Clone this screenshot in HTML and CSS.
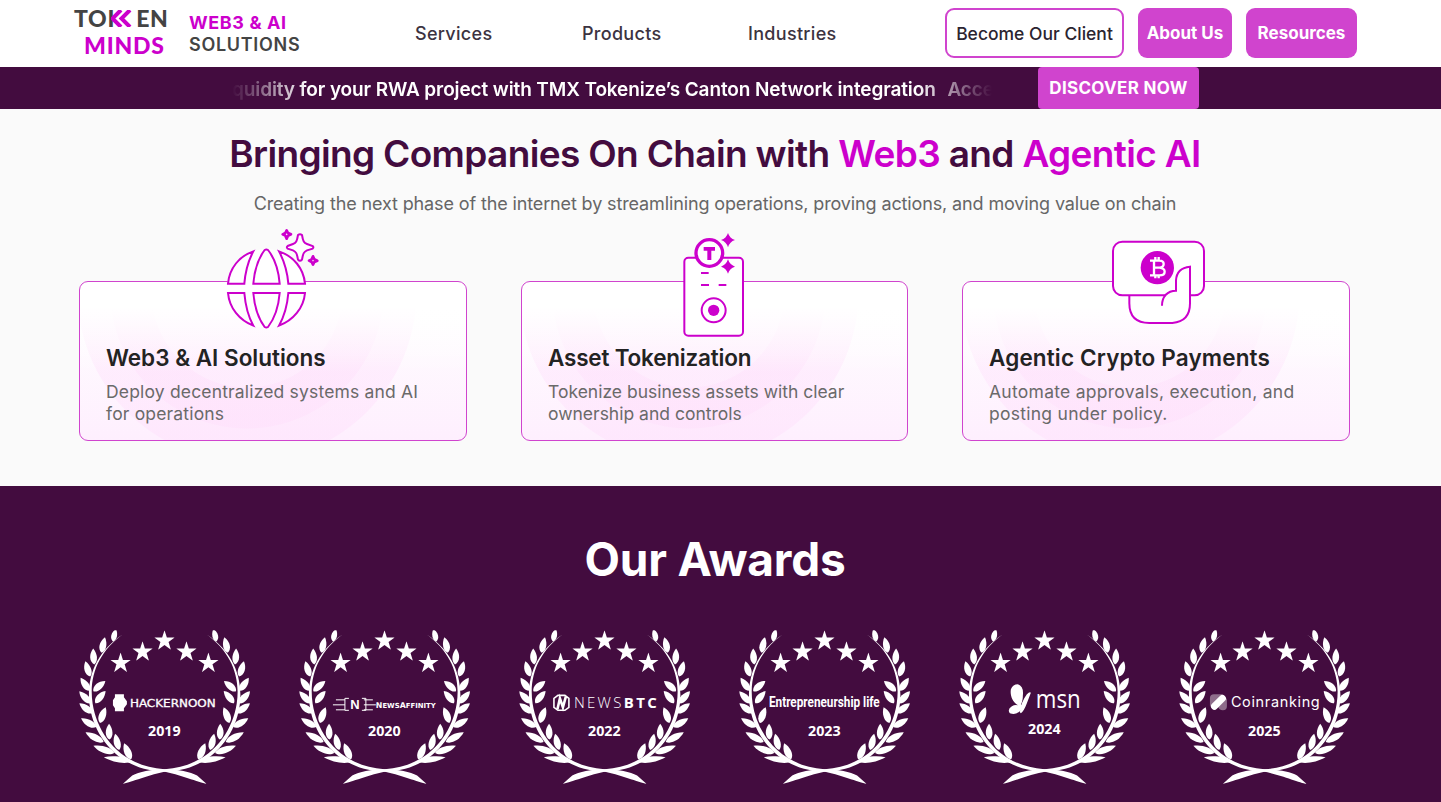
FILE: index.html
```
<!DOCTYPE html>
<html lang="en">
<head>
    <meta charset="UTF-8">
    <meta name="viewport" content="width=device-width, initial-scale=1.0">
    <title>TokenMinds</title>
    <link rel="stylesheet" href="styles.css">
</head>
<body>

    <!-- shared shapes for the award badges -->
    <svg class="defs" width="0" height="0" aria-hidden="true">
        <symbol id="star" viewBox="0 0 60 58">
            <path d="M30 0L37 22H60L42 35L49 58L30 44L11 58L18 35L0 22H23Z"/>
        </symbol>
        <path id="leaf" d="M0 0C-15 -9 -14 -32 0 -48C12 -32 13 -9 0 0Z"/>
        <g id="branch">
            <path d="M158 57C88 108 55 180 68 265C82 355 150 453 284 462C325 463 362 469 382 481L410 506C390 503 325 476 280 469C145 465 68 360 58 262C50 178 84 106 158 57Z"/>
            <use href="#leaf" transform="translate(129 78) rotate(14) scale(.85 .8)"/>
            <use href="#leaf" transform="translate(95 112) rotate(12)"/>
            <use href="#leaf" transform="translate(73 147) rotate(-4)"/>
            <use href="#leaf" transform="translate(61 183) rotate(-18)"/>
            <use href="#leaf" transform="translate(60 226) rotate(-36)"/>
            <use href="#leaf" transform="translate(63 264) rotate(-44) scale(1 1.05)"/>
            <use href="#leaf" transform="translate(69 293) rotate(-54) scale(1 1.05)"/>
            <use href="#leaf" transform="translate(79 335) rotate(-60) scale(1 1.1)"/>
            <use href="#leaf" transform="translate(101 380) rotate(-62) scale(1 1.28)"/>
            <use href="#leaf" transform="translate(133 413) rotate(-71) scale(1 1.38)"/>
            <use href="#leaf" transform="translate(187 438) rotate(-82) scale(.85 1.8)"/>
            <use href="#leaf" transform="translate(70 228) rotate(49)"/>
            <use href="#leaf" transform="translate(76 264) rotate(40)"/>
            <use href="#leaf" transform="translate(90 323) rotate(20) scale(1.05)"/>
            <use href="#leaf" transform="translate(119 373) rotate(-2)"/>
            <use href="#leaf" transform="translate(148 404) rotate(-14) scale(1 1.05)"/>
            <use href="#leaf" transform="translate(184 432) rotate(-24) scale(1.05 1.1)"/>
        </g>
        <symbol id="wreath" viewBox="27 44 514 465">
            <use href="#branch"/>
            <use href="#branch" transform="translate(569 0) scale(-1 1)"/>
            <use href="#star" x="121" y="111" width="62" height="59"/>
            <use href="#star" x="187" y="77" width="62" height="59"/>
            <use href="#star" x="253" y="44" width="62" height="59"/>
            <use href="#star" x="319" y="77" width="62" height="59"/>
            <use href="#star" x="385" y="111" width="62" height="59"/>
        </symbol>
    </svg>

    <header class="header">
        <a class="logo" href="#">
            <span class="logo-name">
                <span class="logo-token">TOI<svg width="21" height="17" viewBox="0 0 21 17"><path d="M10 0L1.5 8.5L10 17M19 0L10.5 8.5L19 17" fill="none" stroke="#c0c" stroke-width="4"/></svg>EN</span>
                <span class="logo-minds">MINDS</span>
            </span>
            <span class="logo-tag"><b>WEB3 &amp; AI</b><br>SOLUTIONS</span>
        </a>
        <nav class="nav">
            <a href="#">Services</a>
            <a href="#">Products</a>
            <a href="#">Industries</a>
        </nav>
        <div class="header-buttons">
            <a class="btn btn-outline" href="#">Become Our Client</a>
            <a class="btn btn-about" href="#">About Us</a>
            <a class="btn btn-resources" href="#">Resources</a>
        </div>
    </header>

    <div class="ticker">
        <div class="ticker-text"><p>quidity for your RWA project with TMX Tokenize’s Canton Network integration <span>Acce</span></p></div>
        <a class="ticker-button" href="#">DISCOVER NOW</a>
    </div>

    <section class="hero">
        <h1>Bringing Companies On Chain with <em>Web3</em> and <em>Agentic AI</em></h1>
        <p class="subtitle">Creating the next phase of the internet by streamlining operations, proving actions, and moving value on chain</p>

        <div class="cards">
            <article class="card">
                <svg class="card-icon icon-globe" width="140" height="120" viewBox="0 0 420 360">
                    <circle cx="199" cy="205" r="118" fill="#fff"/>
                    <g fill="#fff" stroke="#c0c" stroke-width="6">
                        <path d="M84 191C88 145 118 108 160 94C145 122 136 155 133 191Z"/>
                        <path d="M160 191C163 153 175 115 194 90Q199 87 204 90C224 115 236 153 239 191Z"/>
                        <path d="M315 191C311 145 280 108 237 94C252 122 262 155 265 191Z"/>
                        <path d="M84 219C88 264 118 301 160 317C145 290 136 255 133 219Z"/>
                        <path d="M160 219C163 257 175 295 194 321Q199 324 204 321C224 295 236 257 239 219Z"/>
                        <path d="M315 219C311 264 280 301 237 317C252 290 262 255 265 219Z"/>
                        <path d="M294 45Q300 40 306 45C309 64 312 69 321 72L338 78Q342 82 338 86L321 91C312 95 309 100 306 119Q300 126 294 119C291 100 288 95 279 91L263 86Q258 82 263 78L279 72C288 69 291 64 294 45Z"/>
                        <g stroke-linejoin="round" stroke-width="8">
                            <path d="M260 31L264 39L273 43L264 47L260 56L256 47L248 43L256 39Z"/>
                            <path d="M339 109L343 118L352 122L343 126L339 134L335 126L327 122L335 118Z"/>
                        </g>
                    </g>
                </svg>
                <h2>Web3 &amp; AI Solutions</h2>
                <p>Deploy decentralized systems and AI<br>for operations</p>
            </article>
            <article class="card card-asset">
                <svg class="card-icon icon-token" width="110" height="120" viewBox="0 0 330 360">
                    <rect x="73" y="98" width="176" height="234" rx="12" fill="#fff" stroke="#c0c" stroke-width="6"/>
                    <circle cx="148" cy="84" r="40" fill="#fff" stroke="#c0c" stroke-width="10"/>
                    <path d="M131 66H165V77H154V105H142V77H131Z" fill="#c0c"/>
                    <path d="M123 144H146M123 180H147M176 180H199" stroke="#c0c" stroke-width="6"/>
                    <circle cx="161" cy="256" r="36" fill="none" stroke="#c0c" stroke-width="6"/>
                    <circle cx="161" cy="256" r="17" fill="#c0c"/>
                    <path d="M204 24Q209 40 225 45Q209 50 204 67Q199 50 183 45Q199 40 204 24ZM204 103Q209 119 225 125Q209 130 204 146Q199 130 183 125Q199 119 204 103Z" fill="#c0c"/>
                </svg>
                <h2>Asset Tokenization</h2>
                <p>Tokenize business assets with clear<br>ownership and controls</p>
            </article>
            <article class="card card-payments">
                <svg class="card-icon icon-pay" width="130" height="110" viewBox="0 0 390 330">
                    <g fill="#fff" stroke="#c0c" stroke-width="6">
                        <path d="M103 208V235Q103 294 163 294H232Q285 290 285 235V208Z"/>
                        <rect x="54" y="50" width="273" height="161" rx="28"/>
                        <path d="M201 242C201 215 217 197 243 197V166Q245 129 285 125V214L279 230H205Z" stroke="none"/>
                        <path d="M201 242C201 215 217 197 243 197V166Q245 129 285 125V235" fill="none"/>
                    </g>
                    <circle cx="187" cy="128" r="50" fill="#c0c"/>
                    <path d="M165 107H193Q206 107 206 117Q206 126 194 128Q209 130 209 140Q209 151 193 151H165M177 107V151M177 128H194M181 96V107M191 96V107M181 151V160M191 151V160" fill="none" stroke="#fff" stroke-width="7"/>
                </svg>
                <h2>Agentic Crypto Payments</h2>
                <p>Automate approvals, execution, and<br>posting under policy.</p>
            </article>
        </div>
    </section>

    <section class="awards">
        <h2>Our Awards</h2>
        <div class="awards-list">
            <div class="award">
                <svg width="171" height="155" viewBox="9 14.67 171.33 155">
                    <use href="#wreath" x="9" y="14.67" width="171.33" height="155"/>
                    <path d="M45 79H54V82L57 86V89L54 93V96H45V93L43 90V85L45 82Z"/>
                    <text class="brand-hacker" x="60" y="91.5" textLength="86" lengthAdjust="spacingAndGlyphs">HACKERNOON</text>
                    <text class="year" x="94.5" y="121">2019</text>
                </svg>
            </div>
            <div class="award">
                <svg width="171" height="155" viewBox="9 14.67 171.33 155">
                    <use href="#wreath" x="9" y="14.67" width="171.33" height="155"/>
                    <path d="M46 84.5H55M43 89.5H55M46 94.5H55M59 83H55V95H59M72 83H76V95H72M74 84.5H83M74 89.5H86M74 94.5H83" fill="none" stroke="#fff" stroke-width="1"/>
                    <text class="brand-n" x="65" y="94">N</text>
                    <text class="brand-affinity" x="86" y="92.5" textLength="60" lengthAdjust="spacingAndGlyphs">N<tspan font-size="7">EWS</tspan>A<tspan font-size="7">FFINITY</tspan></text>
                    <text class="year" x="94.5" y="121">2020</text>
                </svg>
            </div>
            <div class="award">
                <svg width="171" height="155" viewBox="9 14.67 171.33 155">
                    <use href="#wreath" x="9" y="14.67" width="171.33" height="155"/>
                    <path d="M48 80H55L59 83V92L55 95H48L44 92V83Z" fill="none" stroke="#fff" stroke-width="1.6"/>
                    <path d="M47.5 94L50 83L53 92L56 81" fill="none" stroke="#fff" stroke-width="2.6"/>
                    <text class="brand-btc" x="64" y="92.5" textLength="83">NEWS<tspan font-weight="700">BTC</tspan></text>
                    <text class="year" x="94.5" y="121">2022</text>
                </svg>
            </div>
            <div class="award">
                <svg width="171" height="155" viewBox="9 14.67 171.33 155">
                    <use href="#wreath" x="9" y="14.67" width="171.33" height="155"/>
                    <text class="brand-life" x="39" y="91.5" textLength="111" lengthAdjust="spacingAndGlyphs">Entrepreneurship life</text>
                    <text class="year" x="94.5" y="121">2023</text>
                </svg>
            </div>
            <div class="award">
                <svg width="171" height="155" viewBox="9 14.67 171.33 155">
                    <use href="#wreath" x="9" y="14.67" width="171.33" height="155"/>
                    <path d="M68 90C62 86 60 79 61 74Q63 69 68 69Q74 71 73 80Q73 86 71 89Q74 91 71 95Q67 100 60 98Q57 94 62 91Q65 89 68 90Z"/>
                    <path d="M70 97Q71 87 77 79Q80 76 81 77.5L77 88Q74 96 71 98Z"/>
                    <text class="brand-msn" x="86" y="93" textLength="45" lengthAdjust="spacingAndGlyphs">msn</text>
                    <text class="year" x="94.5" y="119">2024</text>
                </svg>
            </div>
            <div class="award">
                <svg width="171" height="155" viewBox="9 14.67 171.33 155">
                    <use href="#wreath" x="9" y="14.67" width="171.33" height="155"/>
                    <path d="M44 79H53L40 91V83Q40 79 44 79ZM57 83V91Q57 95 53 95Q49 95 48 91Z" opacity=".4"/>
                    <path d="M44.5 91L52.5 83" stroke="#fff" stroke-width="7" stroke-linecap="round"/>
                    <text class="brand-coin" x="61" y="92" textLength="89">Coinranking</text>
                    <text class="year" x="94.5" y="121">2025</text>
                </svg>
            </div>
        </div>
    </section>

</body>
</html>
```
FILE: styles.css
```
* {
    box-sizing: border-box;
}

body {
    margin: 0;
    font-family: Inter, "Open Sans", sans-serif;
    background-color: #fafafa;
    color: #232323;
    overflow: hidden;
}

a {
    color: inherit;
    text-decoration: none;
}

h1, h2, p {
    margin: 0;
}

.defs {
    display: block;
}

.header {
    display: grid;
    grid-template-columns: 341px 530px auto;
    height: 67px;
    padding-left: 74px;
    background-color: #fff;
}

.logo {
    display: flex;
    font-family: Lato, sans-serif;
    color: #444;
}

.logo-name {
    display: flex;
    flex-direction: column;
    width: 115px;
    padding-top: 5px;
    font-size: 23px;
    font-weight: 900;
    line-height: 27px;
}

.logo-token {
    white-space: nowrap;
    line-height: 27px;
    letter-spacing: 0.7px;
}

.logo-token svg {
    margin-left: -4px;
    margin-right: 4px;
}

.logo-minds {
    padding-left: 10px;
    color: #c0c;
    letter-spacing: 0.8px;
}

.logo-tag {
    padding-top: 12px;
    font-family: Inter, sans-serif;
    font-size: 18px;
    font-weight: 600;
    line-height: 22px;
    letter-spacing: 0.7px;
}

.logo-tag b {
    font-weight: 700;
    color: #c0c;
    letter-spacing: 0.6px;
}

.nav {
    display: grid;
    grid-template-columns: 167px 166px auto;
    padding-top: 22px;
    font-size: 18px;
    font-weight: 500;
    line-height: 23px;
    letter-spacing: 0.3px;
    color: #3c3341;
}

.header-buttons {
    display: flex;
    gap: 14px;
    padding-top: 8px;
}

.btn {
    display: flex;
    align-items: center;
    justify-content: center;
    height: 50px;
    border-radius: 9px;
    background-color: #d044ce;
    color: #fff;
    font-size: 17px;
    font-weight: 700;
    white-space: nowrap;
}

.btn-outline {
    width: 179px;
    border: 2px solid #d044ce;
    background-color: #fff;
    color: #2b2430;
    font-size: 17.5px;
    font-weight: 500;
}

.btn-about {
    width: 94px;
}

.btn-resources {
    width: 111px;
}

.ticker {
    display: flex;
    height: 42px;
    padding-left: 232px;
    background-color: #430c3f;
    color: #fff;
}

.ticker-text {
    width: 760px;
    margin-right: 46px;
    -webkit-mask-image: linear-gradient(90deg, transparent, #000 76px, #000 684px, transparent);
    mask-image: linear-gradient(90deg, transparent, #000 76px, #000 684px, transparent);
}

.ticker-text p {
    font-size: 19px;
    font-weight: 600;
    line-height: 45px;
    letter-spacing: -0.11px;
    white-space: nowrap;
}

.ticker-text span {
    margin-left: 7px;
}

.ticker-button {
    width: 161px;
    border-radius: 4px;
    background-color: #d044ce;
    font-size: 17px;
    font-weight: 700;
    line-height: 42px;
    letter-spacing: 0.3px;
    text-align: center;
}

.hero {
    height: 377px;
    padding-top: 21px;
}

.hero h1 {
    width: 1430px;
    font-size: 37px;
    font-weight: 600;
    line-height: 48px;
    letter-spacing: -0.65px;
    text-align: center;
    color: #430c3f;
    white-space: nowrap;
}

.hero h1 em {
    font-style: normal;
    color: #c0c;
}

.subtitle {
    width: 1430px;
    margin-top: 13px;
    font-size: 18px;
    line-height: 25px;
    letter-spacing: -0.13px;
    text-align: center;
    color: #666;
    white-space: nowrap;
}

.cards {
    display: grid;
    grid-template-columns: 388px 387px 388px;
    gap: 54px;
    width: 1271px;
    margin: 65px 0 0 79px;
}

.card {
    position: relative;
    height: 160px;
    padding: 61px 26px 0;
    border: 1px solid #d044ce;
    border-radius: 9px;
    background:
        linear-gradient(#fff 25px, rgba(255, 255, 255, 0) 90px),
        radial-gradient(circle at 167px 10px, transparent 95px, rgba(255, 214, 250, 0.25) 96px 136px, transparent 137px),
        radial-gradient(circle at 167px 10px, rgba(255, 214, 250, 0.3) 169px, transparent 170px),
        linear-gradient(#fff 10%, #feeffe);
}

.card-icon {
    position: absolute;
}

.icon-globe {
    left: 120px;
    top: -62px;
}

.icon-token {
    left: 138px;
    top: -57px;
}

.icon-pay {
    left: 132px;
    top: -57px;
}

.card h2 {
    font-size: 22.5px;
    font-weight: 600;
    line-height: 30px;
    white-space: nowrap;
}

.card p {
    margin-top: 8px;
    font-size: 17.5px;
    line-height: 22px;
    letter-spacing: 0.17px;
    color: #6a6a6a;
    white-space: nowrap;
}

.card-asset h2 {
    letter-spacing: -0.2px;
}

.card-asset p {
    letter-spacing: 0;
}

.card-payments h2 {
    letter-spacing: 0.15px;
}

.card-payments p {
    letter-spacing: 0.27px;
}

.awards {
    height: 316px;
    padding-top: 43px;
    background-color: #430c3f;
    color: #fff;
}

.awards h2 {
    width: 1430px;
    font-size: 46px;
    font-weight: 700;
    line-height: 60px;
    letter-spacing: -0.2px;
    text-align: center;
}

.awards-list {
    display: grid;
    grid-template-columns: repeat(6, 171px);
    gap: 49px;
    margin: 41px 0 0 79px;
}

.award svg {
    display: block;
    fill: #fff;
}

.year {
    font-family: "Noto Sans", sans-serif;
    font-size: 14.3px;
    font-weight: 700;
    text-anchor: middle;
}

.brand-hacker {
    font-family: "DejaVu Sans", sans-serif;
    font-size: 10.5px;
    font-weight: 400;
    stroke: #fff;
    stroke-width: 0.3px;
}

.brand-n {
    font-family: "Liberation Sans", sans-serif;
    font-size: 13px;
    font-weight: 700;
    text-anchor: middle;
}

.brand-affinity {
    font-family: "DejaVu Sans", sans-serif;
    font-size: 8px;
    font-weight: 700;
}

.brand-btc {
    font-family: "Open Sans", sans-serif;
    font-size: 15px;
    font-weight: 300;
}

.brand-life {
    font-family: Roboto, sans-serif;
    font-size: 15px;
    font-weight: 700;
}

.brand-msn {
    font-family: "Open Sans", sans-serif;
    font-size: 26px;
}

.brand-coin {
    font-family: Inter, sans-serif;
    font-size: 14.5px;
    font-weight: 400;
}
```
